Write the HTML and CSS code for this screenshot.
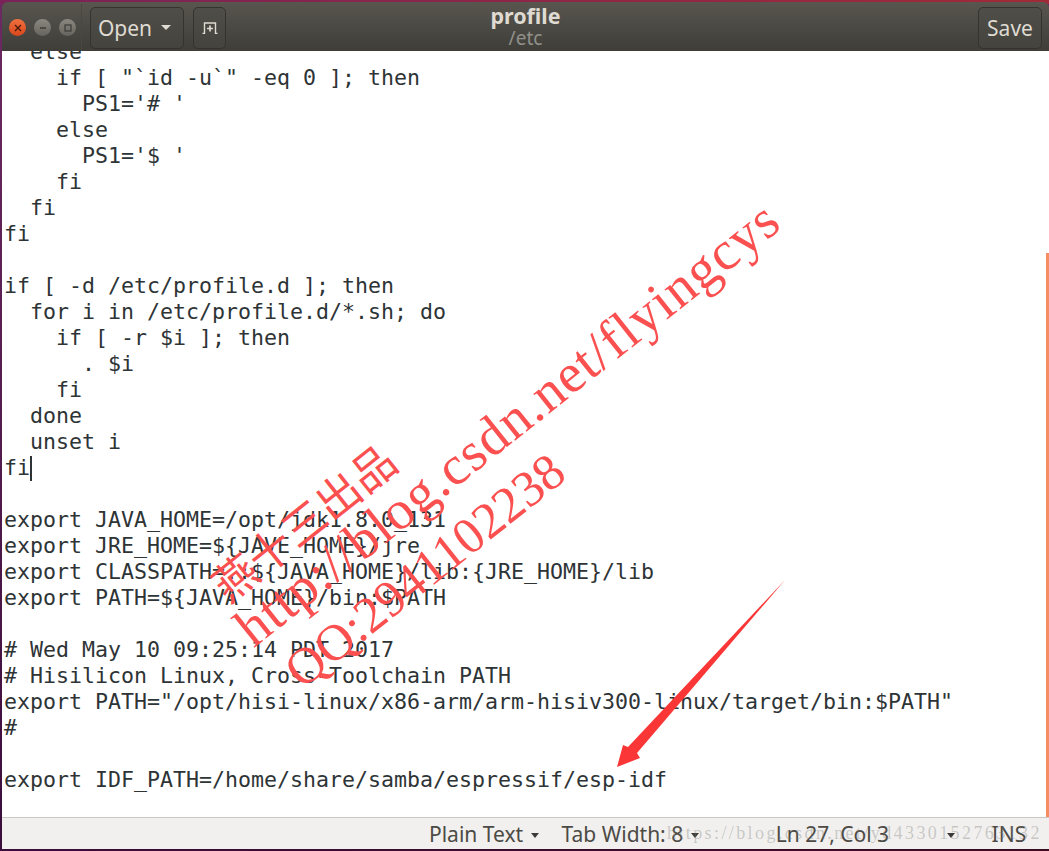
FILE: index.html
```html
<!DOCTYPE html>
<html lang="en">
<head>
<meta charset="utf-8">
<title>profile</title>
<link rel="stylesheet" href="styles.css">
</head>
<body>
<div class="window">
  <header class="titlebar">
    <div class="controls">
      <span class="ctl close"><svg viewBox="0 0 8 8" width="8" height="8"><path d="M1 1l6 6M7 1l-6 6" stroke="#4a1a0a" stroke-width="1.4" fill="none"/></svg></span>
      <span class="ctl"><svg viewBox="0 0 8 8" width="8" height="8"><path d="M1 4h6" stroke="#3c3b37" stroke-width="1.4" fill="none"/></svg></span>
      <span class="ctl"><svg viewBox="0 0 8 8" width="8" height="8"><rect x="1" y="1" width="6" height="6" stroke="#3c3b37" stroke-width="1.2" fill="none"/></svg></span>
    </div>
    <div class="btn open">Open <span class="caret light"></span></div>
    <div class="btn newdoc">
      <svg viewBox="0 0 16 12" width="16" height="12"><path d="M0.5 11.5H2.5V1H13.5V11.5H15.5" stroke="#dfdbd2" stroke-width="1.4" fill="none"/><path d="M8 3.5v6M5 6.5h6" stroke="#dfdbd2" stroke-width="1.7" fill="none"/></svg>
    </div>
    <div class="title">
      <div class="t1">profile</div>
      <div class="t2">/etc</div>
    </div>
    <div class="btn save">Save</div>
  </header>
  <main class="editor">
<pre class="code">  else
    if [ "`id -u`" -eq 0 ]; then
      PS1='# '
    else
      PS1='$ '
    fi
  fi
fi

if [ -d /etc/profile.d ]; then
  for i in /etc/profile.d/*.sh; do
    if [ -r $i ]; then
      . $i
    fi
  done
  unset i
fi<span class="cursor"></span>

export JAVA_HOME=/opt/jdk1.8.0_131
export JRE_HOME=${JAVE_HOME}/jre
export CLASSPATH=.:${JAVA_HOME}/lib:{JRE_HOME}/lib
export PATH=${JAVA_HOME}/bin:$PATH

# Wed May 10 09:25:14 PDT 2017
# Hisilicon Linux, Cross-Toolchain PATH
export PATH="/opt/hisi-linux/x86-arm/arm-hisiv300-linux/target/bin:$PATH"
#

export IDF_PATH=/home/share/samba/espressif/esp-idf</pre>
    <div class="overview"></div>
  </main>
  <footer class="status">
    <span class="st">Plain Text <span class="caret"></span></span>
    <span class="st tab">Tab Width: 8 <span class="caret"></span></span>
    <span class="st pos">Ln 27, Col 3 <span class="caret far"></span></span>
    <span class="st ins">INS</span>
  </footer>
</div>
<div class="wm wm-name">燕十三出品</div>
<div class="wm wm-url">http://blog.csdn.net/flyingcys</div>
<div class="wm wm-qq">QQ:2941102238</div>
<svg class="arrow" width="1049" height="851" viewBox="0 0 1049 851"><polygon points="785,580 637,753 640,758 617,767 623,745 628,747" fill="#fb3636"/></svg>
<div class="wm-grey">https://blog.csdn.net/yd4330152763132</div>
</body>
</html>
```
FILE: styles.css
```css
* { box-sizing: border-box; }
html, body { margin: 0; height: 100%; }
body {
  width: 1049px;
  height: 851px;
  overflow: hidden;
  position: relative;
  background:
    linear-gradient(90deg, #7a2358, #a02a38) 0 0 / 100% 4px no-repeat,
    linear-gradient(90deg, #3a0d3c, #3a0c22) 0 100% / 100% 4px no-repeat,
    linear-gradient(#6c2a62, #3a0d3c);
  padding: 2px 0 2px 2px;
  font-family: "Noto Sans", sans-serif;
}
.window {
  height: 100%;
  display: flex;
  flex-direction: column;
  border-radius: 6px 6px 0 0;
  overflow: hidden;
}
.titlebar {
  height: 49px;
  flex: none;
  display: flex;
  align-items: center;
  padding: 3px 7px 1px 7px;
  background: linear-gradient(#595650, #3e3d38);
  color: #dfdbd2;
}
.controls {
  display: flex;
  gap: 8px;
  width: 73px;
  height: 48px;
  align-items: center;
  border-right: 1px solid #4a4843;
  margin-right: 8px;
}
.ctl {
  width: 17px;
  height: 17px;
  border-radius: 50%;
  background: linear-gradient(#8b8880, #66645e);
  display: flex;
  align-items: center;
  justify-content: center;
}
.ctl.close { background: linear-gradient(#f0703e, #d9471c); }
.btn {
  height: 42px;
  border: 1px solid #34332f;
  border-radius: 5px;
  background: linear-gradient(#504e48, #45433e);
  display: flex;
  align-items: center;
  justify-content: center;
  font-size: 21px;
  color: #dfdbd2;
}
.open { width: 94px; gap: 9px; padding-right: 5px; }
.newdoc { width: 33px; margin-left: 9px; }
.save { width: 64px; }
.title {
  flex: 1;
  text-align: center;
  line-height: 1.15;
  padding-right: 153px;
  margin-top: -1px;
}
.t1 { font-size: 21.5px; font-weight: 700; color: #dfdbd2; }
.t2 { font-size: 19px; color: #92908a; }
.caret {
  display: inline-block;
  width: 0;
  height: 0;
  border: 4.5px solid transparent;
  border-top: 5px solid #3c3b37;
  border-bottom: 0;
  vertical-align: middle;
  margin-left: 2px;
}
.caret.light { border-width: 5px 5px 0; border-top-color: #dfdbd2; margin: 0; }
.caret.far { margin-left: 52px; }
.editor {
  flex: 1;
  min-height: 0;
  background: #fff;
  position: relative;
  overflow: hidden;
}
.code {
  margin: -12px 0 0;
  padding-left: 2px;
  font-family: "DejaVu Sans Mono", monospace;
  font-size: 21.6px;
  line-height: 26px;
  color: #2e3436;
}
.cursor {
  display: inline-block;
  width: 1.5px;
  height: 25px;
  background: #2e3436;
  vertical-align: -6px;
}
.overview {
  position: absolute;
  right: 0;
  top: 202px;
  bottom: 0;
  width: 3px;
  background: #f58e63;
}
.status {
  height: 32px;
  flex: none;
  background: #f1f0ee;
  border-top: 1px solid #c9c8c4;
  display: flex;
  align-items: center;
  font-size: 21px;
  color: #4c4a45;
  padding-left: 427px;
}
.st { white-space: nowrap; }
.tab { margin-left: 23px; }
.pos { margin-left: 77px; }
.ins { margin-left: 37px; }
.wm {
  position: absolute;
  color: #fb5050;
  font-family: "Liberation Serif", serif;
  transform: rotate(-38.5deg);
  transform-origin: left bottom;
  white-space: nowrap;
}
.wm-name { left: 232px; top: 559px; font-size: 44px; line-height: 50px; font-family: "Noto Sans CJK SC", serif; }
.wm-url { left: 261px; top: 598px; font-size: 55px; letter-spacing: 1.1px; line-height: 60px; }
.wm-qq { left: 310px; top: 640px; font-size: 51px; line-height: 60px; }
.arrow { position: absolute; left: 0; top: 0; }
.wm-grey {
  position: absolute;
  left: 667px;
  top: 822px;
  font-family: "Liberation Serif", serif;
  font-size: 18px;
  letter-spacing: 2.4px;
  line-height: 22px;
  color: rgba(120, 120, 120, .35);
  white-space: nowrap;
}
```
